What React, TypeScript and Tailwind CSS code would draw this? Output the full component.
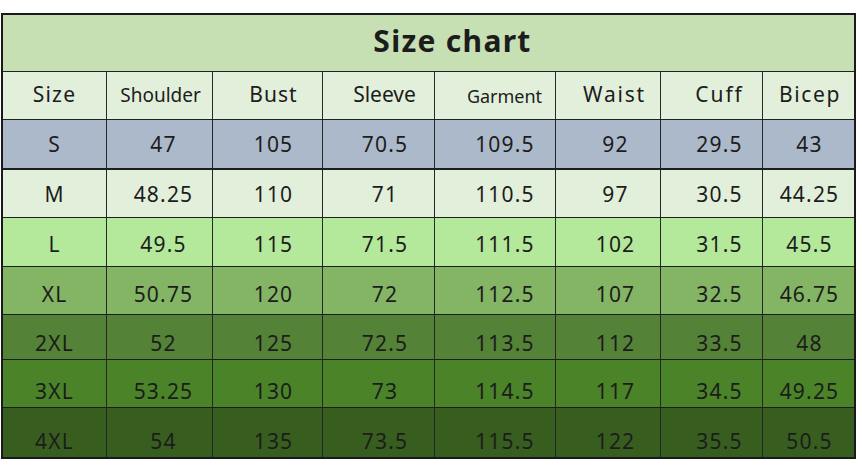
import React from "react";

const cols = [
  { w: "w-[104px]", shift: "pl-[0px]" },
  { w: "w-[106px]", shift: "pl-[8px]" },
  { w: "w-[110px]", shift: "pl-[12px]" },
  { w: "w-[112px]", shift: "pl-[13px]" },
  { w: "w-[121px]", shift: "pl-[20px]" },
  { w: "w-[105px]", shift: "pl-[15px]" },
  { w: "w-[102px]", shift: "pl-[16px]" },
  { w: "w-[91px]", shift: "pl-[2px]" },
];

const headers = [
  { t: "Size", cls: "text-[21px] tracking-[1.2px]", shift: "pl-[0px]" },
  { t: "Shoulder", cls: "text-[19px] tracking-[0px]", shift: "pl-[2px]" },
  { t: "Bust", cls: "text-[21px] tracking-[1px]", shift: "pl-[12px]" },
  { t: "Sleeve", cls: "text-[21px] tracking-[0px]", shift: "pl-[12px]" },
  { t: "Garment", cls: "text-[18px] tracking-[0px]", shift: "pl-[19px]" },
  { t: "Waist", cls: "text-[21px] tracking-[1.8px]", shift: "pl-[13px]" },
  { t: "Cuff", cls: "text-[21px] tracking-[2px]", shift: "pl-[16px]" },
  { t: "Bicep", cls: "text-[21px] tracking-[1.6px]", shift: "pl-[3px]" },
];

const rows = [
  { bg: "bg-[#acb9ca]", h: "h-[50px] border-b-2", pb: "pb-[13px]", v: ["S", "47", "105", "70.5", "109.5", "92", "29.5", "43"] },
  { bg: "bg-[#e2efda]", h: "h-[48px] border-b", pb: "pb-[12px]", v: ["M", "48.25", "110", "71", "110.5", "97", "30.5", "44.25"] },
  { bg: "bg-[#b4e89b]", h: "h-[49px] border-b", pb: "pb-[11px]", v: ["L", "49.5", "115", "71.5", "111.5", "102", "31.5", "45.5"] },
  { bg: "bg-[#84b565]", h: "h-[48px] border-b", pb: "pb-[9px]", v: ["XL", "50.75", "120", "72", "112.5", "107", "32.5", "46.75"] },
  { bg: "bg-[#548236]", h: "h-[45px] border-b", pb: "pb-[5px]", v: ["2XL", "52", "125", "72.5", "113.5", "112", "33.5", "48"] },
  { bg: "bg-[#4a8328]", h: "h-[48px] border-b", pb: "pb-[5px]", v: ["3XL", "53.25", "130", "73", "114.5", "117", "34.5", "49.25"] },
  { bg: "bg-[#385e1f]", h: "h-[49px]", pb: "pb-[5px]", v: ["4XL", "54", "135", "73.5", "115.5", "122", "35.5", "50.5"] },
];

export default function App() {
  return (
    <div
      className="w-[862px] h-[475px] bg-white pt-[13px] pl-[1px]"
      style={{ fontFamily: '"Noto Sans", "Open Sans", sans-serif' }}
    >
      <div className="w-[855px] border-2 border-[#1a1a1a] text-[#1c1c1c]">
        <div className="h-[57px] border-b border-[#222222] bg-[#c6e0b4] flex items-end justify-center pl-[48px] pb-[15px]">
          <span className="text-[30px] font-bold leading-none tracking-[1.3px]">Size chart</span>
        </div>
        <div className="flex h-[48px] border-b border-[#222222] bg-[#e2efda]">
          {headers.map((hd, i) => (
            <div
              key={i}
              className={`${cols[i].w} ${i < 7 ? "border-r border-[#2a2a2a]" : ""} flex items-end justify-center pb-[14px] ${hd.shift}`}
            >
              <span className={`${hd.cls} leading-none`}>{hd.t}</span>
            </div>
          ))}
        </div>
        {rows.map((r, ri) => (
          <div key={ri} className={`flex ${r.h} border-[#1e1e1e] ${r.bg}`}>
            {r.v.map((val, i) => (
              <div
                key={i}
                className={`${cols[i].w} ${i < 7 ? "border-r border-[#262626]" : ""} flex items-end justify-center ${r.pb} ${cols[i].shift}`}
              >
                <span className="text-[21px] leading-none tracking-[1.2px]">{val}</span>
              </div>
            ))}
          </div>
        ))}
      </div>
    </div>
  );
}
